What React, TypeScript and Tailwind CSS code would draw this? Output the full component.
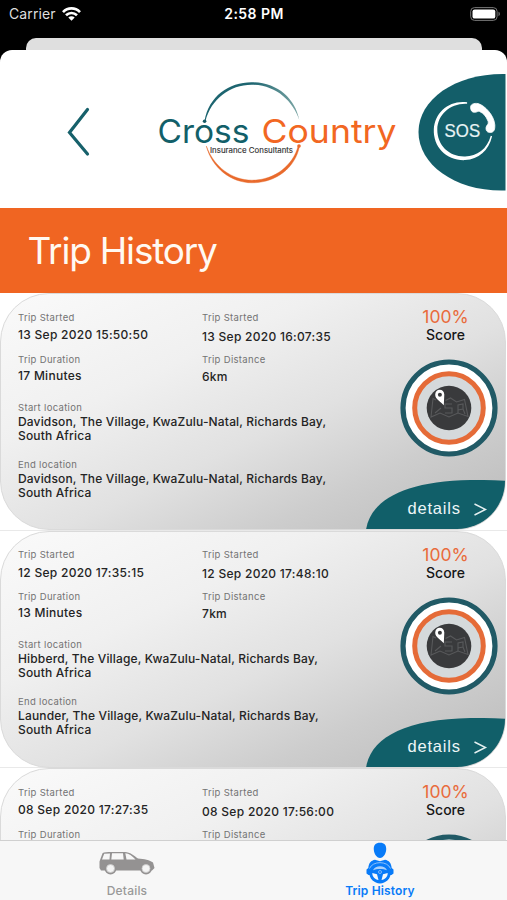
import React from "react";

type Trip = {
  start: string;
  end: string;
  duration: string;
  distance: string;
  from: string;
  to: string;
};

const trips: Trip[] = [
  { start: "13 Sep 2020 15:50:50", end: "13 Sep 2020 16:07:35", duration: "17 Minutes", distance: "6km", from: "Davidson", to: "Davidson" },
  { start: "12 Sep 2020 17:35:15", end: "12 Sep 2020 17:48:10", duration: "13 Minutes", distance: "7km", from: "Hibberd", to: "Launder" },
  { start: "08 Sep 2020 17:27:35", end: "08 Sep 2020 17:56:00", duration: "", distance: "", from: "", to: "" },
];

function StatusBar() {
  return (
    <div className="flex h-[28px] items-center justify-between pl-[9px] pr-[6px] text-white">
      <div className="flex w-[160px] items-center gap-[6px]">
        <span className="text-[14px] leading-[28px] tracking-[0.1px] text-[#dedede]">Carrier</span>
        <svg width="19" height="14" viewBox="0 0 19 14" fill="none" stroke="white" strokeWidth="2.7">
          <path d="M1 5.1C5.8.2 13.2.2 18 5.1" />
          <path d="M4 8.3c3.2-3.1 7.8-3.1 11 0" />
          <path d="M9.5 13.8 6.3 10.6c1.8-1.7 4.6-1.7 6.4 0z" fill="white" stroke="none" />
        </svg>
      </div>
      <span className="pr-[2px] text-[14px] font-semibold leading-[28px] tracking-[0.45px]">2:58 PM</span>
      <div className="flex w-[160px] justify-end">
        <svg width="31" height="14" viewBox="0 0 31 14">
          <rect x="0.7" y="0.6" width="26.4" height="12.8" rx="3.8" fill="none" stroke="#777" strokeWidth="1" />
          <rect x="2.5" y="2.4" width="22.8" height="9.2" rx="2.2" fill="white" />
          <path d="M28.5 4.8c1.8.6 1.8 3.8 0 4.4z" fill="#777" />
        </svg>
      </div>
    </div>
  );
}

function Logo() {
  return (
    <svg width="250" height="110" viewBox="0 0 250 110">
      <defs>
        <linearGradient id="tealArc" x1="0" x2="1">
          <stop offset="0.5" stopColor="#1d6570" />
          <stop offset="1" stopColor="#7da7a6" />
        </linearGradient>
      </defs>
      <path d="M49.500 44C54 19 74 5.300 96.500 5.300C122 5.300 140 21 144.300 43C138 24 121 7.700 96.500 7.700C75 7.700 56 22 50.500 44Z" fill="url(#tealArc)" />
      <path d="M51.300 69C57 91 76 105.800 97 105.800C121 105.800 140 91 144.500 69.500L143 69.500C138 88 120 103.200 97 103.200C77 103.200 59 90 51.300 69Z" fill="#e96a2c" stroke="#e96a2c" strokeWidth=".4" />
      <circle cx="49.600" cy="44.200" r="1.800" fill="#185b66" />
      <circle cx="144" cy="69" r="1.800" fill="#e96a2c" />
      <text x="2.500" y="65.500" textLength="92" lengthAdjust="spacingAndGlyphs" fontSize="33" fill="#125f69">Cross</text>
      <text x="106.500" y="65.500" textLength="135" lengthAdjust="spacingAndGlyphs" fontSize="33" fill="#f26722">Country</text>
      <text x="55" y="75.500" textLength="83" lengthAdjust="spacingAndGlyphs" fontSize="7.600" fill="#333" stroke="#333" strokeWidth=".15">Insurance Consultants</text>
    </svg>
  );
}

function Sos() {
  return (
    <svg width="88" height="118" viewBox="0 0 88 118">
      <path d="M87.500 1V117.500C38 119 .5 92 .5 59C.5 26 38 0 87.500 1Z" fill="#135e69" />
      <g transform="translate(.6 .3)">
        <path d="M48.500 29C31 26.500 16 39 15.200 56C14.500 74 28 87.500 46.500 86.800C60 86 70 77.500 73.500 63L72.200 62.500C68.500 76 58.500 82.800 46.500 83.200C31 83.700 18.500 72.500 18.700 56C19 41 32 29.500 48.500 30.400Z" fill="white" />
        <path d="M52 34.500C51.500 31 55.500 29.500 59.500 30.300C66 32 75.500 42 76.200 51.500C76.400 55.500 75.800 59 72 59.200C68.500 59.500 67 57 67.500 54C68 51.500 70.500 51 69.500 48C67.500 43 65 40 61 38.200C58.800 37.500 59 39 56 39C53 39 52.300 37 52 34.500Z" fill="white" stroke="white" strokeWidth=".8" />
        <text x="26" y="64" textLength="35.500" lengthAdjust="spacingAndGlyphs" fontSize="17.500" fill="#e9f4f5" stroke="#e9f4f5" strokeWidth=".2" className="font-['Liberation_Sans',sans-serif]">SOS</text>
      </g>
    </svg>
  );
}

function ScoreBadge() {
  return (
    <svg width="98" height="98" viewBox="0 0 98 98">
      <circle cx="49" cy="49" r="46" fill="white" stroke="#215a66" strokeWidth="5.200" />
      <circle cx="49" cy="49" r="34.300" fill="#d5d9db" stroke="#e56b38" strokeWidth="5" />
      <circle cx="49" cy="49" r="22.300" fill="#393a3c" />
      <g fill="none" stroke="#58595b" strokeWidth="1.100">
        <path d="M36 41l-3-1.500-2 18.500 9-4 9 4 9-4 10 3.500-3.500-17-8 2.500-6-4-5 2.500" />
        <path d="M41 49l-6 5M52 45h-7v4h7v5h-7M58 54v-8l5-1v5l-5 1M63 50l2 5" />
      </g>
      <path d="M43.800 46.300C41 42.500 35 40.500 35.200 35.500C35.300 32.500 37.300 30.800 39.700 30.800C42.300 30.800 44.200 32.500 44.300 35.500Z" fill="white" />
      <circle cx="39.900" cy="35.700" r="2" fill="#393a3c" />
    </svg>
  );
}

function Label({ children }: { children: React.ReactNode }) {
  return <div className="h-[12px] whitespace-nowrap text-[9.5px] leading-[12px] tracking-[0.32px] text-[#737373]">{children}</div>;
}

function Value({ children }: { children: React.ReactNode }) {
  return <div className="whitespace-nowrap text-[12px] font-[450] leading-[14.25px] tracking-[0.28px] text-[#242424]">{children}</div>;
}

function Place({ label, town }: { label: string; town: string }) {
  return (
    <div>
      <Label>{label}</Label>
      <div className="whitespace-nowrap pt-[1px] text-[12px] font-[450] leading-[14.25px] tracking-[0.16px] text-[#242424]">
        {town}, The Village, KwaZulu-Natal, Richards Bay,
        <br />
        South Africa
      </div>
    </div>
  );
}

function TripCard({ trip }: { trip: Trip }) {
  return (
    <div className="h-[237.5px] shrink-0 border-b border-[#e9e9e9]">
      <article className="relative flex h-[237px] w-[505.500px] overflow-hidden rounded-[49px] border border-[#dadada] bg-[linear-gradient(155deg,#fafafa_0%,#f0f0f0_32%,#e1e1e1_56%,#cdcdcd_76%,#bababa_100%)]">
        <div className="w-[360px] shrink-0 pl-[17px] pt-[17.5px]">
          <div className="flex h-[90px]">
            <div className="w-[184px]">
              <Label>Trip Started</Label>
              <div className="pt-[4.5px]"><Value>{trip.start}</Value></div>
              <div className="pt-[11.5px]"><Label>Trip Duration</Label></div>
              <div className="pt-[3px]"><Value>{trip.duration}</Value></div>
            </div>
            <div>
              <Label>Trip Started</Label>
              <div className="pt-[6px]"><Value>{trip.end}</Value></div>
              <div className="pt-[10px]"><Label>Trip Distance</Label></div>
              <div className="pt-[4px]"><Value>{trip.distance}</Value></div>
            </div>
          </div>
          {trip.from && (
            <div className="flex flex-col gap-[15.5px]">
              <Place label="Start location" town={trip.from} />
              <Place label="End location" town={trip.to} />
            </div>
          )}
        </div>
        <div className="ml-[37px] flex w-[100px] shrink-0 flex-col items-center pt-[13px]">
          <span className="h-[20px] pr-[5px] text-[17.500px] font-normal leading-[20px] text-[#e96b3b]">100%</span>
          <span className="h-[17px] pr-[5px] text-[14px] font-[450] leading-[15px] text-[#171717]">Score</span>
          <div className="ml-[1px] mt-[15px]"><ScoreBadge /></div>
        </div>
        {trip.from && (
          <div className="absolute bottom-[-1px] left-[364.5px] h-[50px] w-[141px]">
            <svg className="absolute inset-0" width="141" height="50" viewBox="0 0 141 50">
              <path d="M0 50C5 15 51-5 141 1V50Z" fill="#115f69" />
              <path d="M108.500 24l11 5.500-11 5.500" fill="none" stroke="#e5f0f1" strokeWidth="1.400" />
            </svg>
            <span className="absolute left-[42px] top-[17px] font-['Liberation_Sans',sans-serif] text-[16.500px] leading-[22px] tracking-[0.8px] text-[#edf6f7]">details</span>
          </div>
        )}
      </article>
    </div>
  );
}

function CarIcon() {
  return (
    <svg width="56" height="24" viewBox="0 0 56 24">
      <path d="M3.500 2.200C5 .8 8 1 13 .9H26C31 1 35 4.500 39 7.500C45 8 51 9 54 11.500L55.500 17L53 19.500H2L.5 17V10.500Z" fill="#949292" />
      <path d="M5.200 2.800L11 2.500l-.5 6H3ZM13 2.300H24l.7 6.200H12.300ZM26.300 2.300C30 2.500 33 5 36.500 8.500H27.500Z" fill="#f7f7f7" />
      <circle cx="11.500" cy="17.500" r="5.900" fill="#949292" />
      <circle cx="11.500" cy="17.500" r="4" fill="#f4f4f4" stroke="#c9c9c9" strokeWidth=".8" />
      <circle cx="47" cy="17.500" r="5.900" fill="#949292" />
      <circle cx="47" cy="17.500" r="4" fill="#f4f4f4" stroke="#c9c9c9" strokeWidth=".8" />
    </svg>
  );
}

function DriverIcon() {
  return (
    <svg width="30" height="42" viewBox="0 0 30 42">
      <path d="M15 .8C19.500 .8 21.500 3.500 21.200 7.500C21 11.500 18.500 16 15 16C11.500 16 9 11.500 8.800 7.500C8.500 3.500 10.500 .8 15 .8Z" fill="#087bf8" />
      <path d="M10 17.800L15 19.200 20 17.800C24 18.500 26.200 21 26.700 26L28.500 27.500V31.500L26.500 33H3.500L1.500 31.500V27.500L3.300 26C3.800 21 6 18.500 10 17.800Z" fill="#087bf8" />
      <circle cx="15" cy="30.800" r="10.700" fill="#087bf8" />
      <path d="M4.500 26.500C7.500 18.700 22.500 18.700 25.500 26.500" fill="none" stroke="#a9d0fb" strokeWidth=".8" />
      <path d="M8 28.300C10 23 20 23 22 28.300C18 26.500 12 26.500 8 28.300Z" fill="#a9d0fb" />
      <path d="M7.300 31L12 32.200 13.500 38C10 37.500 7.300 35 7.300 31ZM22.700 31L18 32.200 16.500 38C20 37.500 22.700 35 22.700 31Z" fill="#f4f8fc" />
      <circle cx="15" cy="30" r="1.500" fill="none" stroke="#a9d0fb" strokeWidth=".7" />
    </svg>
  );
}

export default function App() {
  return (
    <main className="flex h-[900px] w-[507px] flex-col overflow-hidden bg-black font-[Inter,sans-serif]">
      <StatusBar />
      <div className="mx-[25.5px] mt-[9.5px] h-[12.5px] shrink-0 rounded-t-[10px] bg-[#dfdfdf]" />
      <section className="flex min-h-0 flex-1 flex-col overflow-hidden rounded-t-[12px] bg-white">
        <header className="flex h-[157.5px] shrink-0">
          <div className="w-[155px] pl-[66px] pt-[56px]">
            <svg width="26" height="52" viewBox="0 0 26 52" fill="none" stroke="#17616b" strokeWidth="3.200" strokeLinecap="round">
              <path d="M21.500 3.500L3.500 26.500 21.500 48" />
            </svg>
          </div>
          <div className="w-[263px] pt-[27px]"><Logo /></div>
          <div className="pt-[23px]"><Sos /></div>
        </header>
        <div className="flex h-[85.500px] shrink-0 items-center bg-[#f06522] pl-[27.500px] pt-[2px]">
          <h1 className="text-[37px] font-normal leading-[44px] tracking-[-1.2px] text-[#fff9f2]">Trip History</h1>
        </div>
        <div className="flex min-h-0 flex-1 flex-col overflow-hidden">
          {trips.map((trip) => <TripCard key={trip.start} trip={trip} />)}
        </div>
        <nav className="flex h-[60px] shrink-0 border-t border-[#d0d0d0] bg-[#f7f7f7] text-[12px] font-medium leading-[16px]">
          <div className="flex w-[254px] flex-col items-center pt-[10px] text-[#999]">
            <CarIcon />
            <span className="mt-[8px] tracking-[0.2px]">Details</span>
          </div>
          <div className="flex w-[252px] flex-col items-center pt-[1px] text-[#087bf8]">
            <div className="pr-[1px]"><DriverIcon /></div>
            <span className="-mt-[1px] font-semibold tracking-[0.15px]">Trip History</span>
          </div>
        </nav>
      </section>
    </main>
  );
}
